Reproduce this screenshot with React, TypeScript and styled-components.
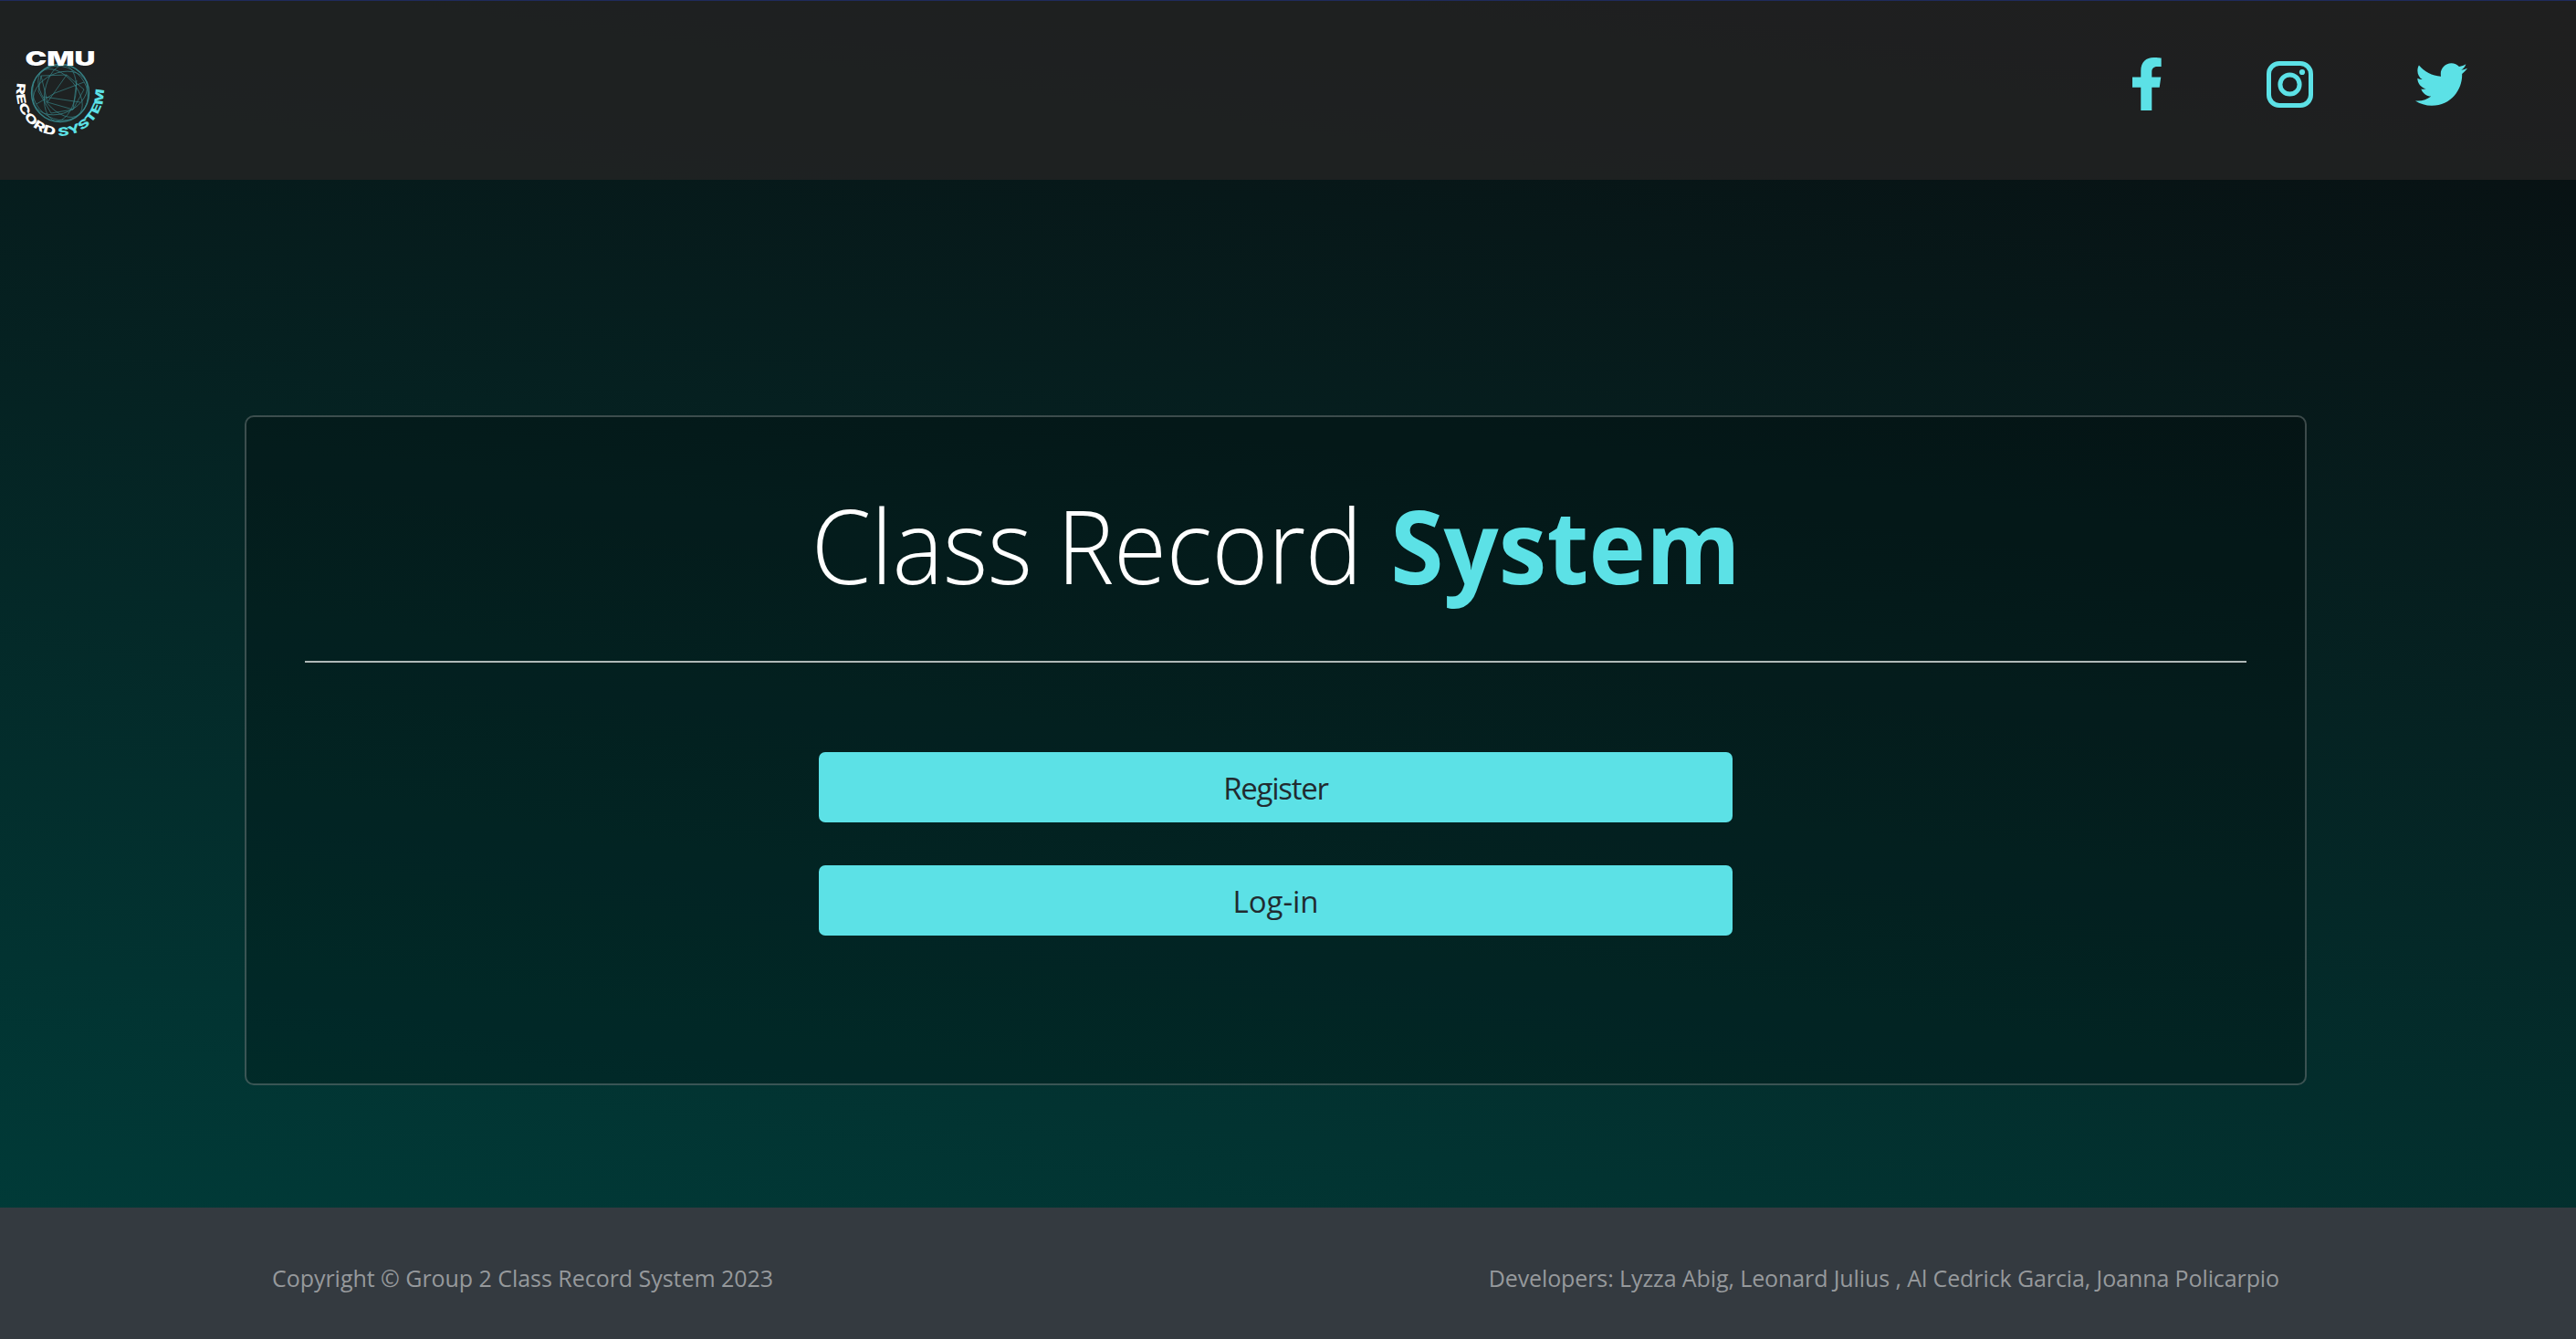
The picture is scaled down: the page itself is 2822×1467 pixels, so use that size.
import React from "react";
import styled, { createGlobalStyle } from "styled-components";
import { FaTwitter } from "react-icons/fa";

const Global = createGlobalStyle`
  * { box-sizing: border-box; }
  body { margin: 0; font-family: "Open Sans", "Noto Sans", sans-serif; }
`;
const Page = styled.div`
  height: 1467px;
  display: flex;
  flex-direction: column;
  background: linear-gradient(188deg, #090d0f 0%, #003e3b 100%);
`;
const Nav = styled.nav`
  height: 197px;
  flex: none;
  display: flex;
  justify-content: space-between;
  align-items: flex-start;
  padding: 29px 119px 0 0;
  background: rgba(38, 37, 37, 0.77);
  border-top: 1px solid #1f2b5c;
`;
const Socials = styled.div`
  display: flex;
  align-items: center;
  height: 124px;
  color: #5ce1e6;
`;
const Social = styled.a<{ $gap: number }>`
  display: flex;
  font-size: 57px;
  margin-left: ${(p) => p.$gap}px;
`;
const Main = styled.main`
  flex: 1;
  padding: 258px 295px 0 268px;
`;
const Card = styled.section`
  height: 734px;
  border: 2px solid rgba(128, 140, 140, 0.45);
  border-radius: 10px;
  background: rgba(0, 0, 0, 0.2);
  padding: 0 64px;
  display: flex;
  flex-direction: column;
  align-items: center;
`;
const Title = styled.h1`
  margin: 60px 0 0;
  height: 160px;
  line-height: 160px;
  font-size: 112px;
  font-weight: 300;
  letter-spacing: -0.4px;
  color: #fff;
  white-space: pre;
  transform: scaleX(0.943);
`;
const Accent = styled.span`
  font-weight: 700;
  color: #5ce1e6;
  letter-spacing: 0.2px;
  margin-left: 4px;
`;
const Rule = styled.hr`
  width: 100%;
  height: 2px;
  border: 0;
  margin: 47px 0 98px;
  background: #b0b9b8;
`;
const Button = styled.button<{ $track: number }>`
  width: 1001px;
  height: 77px;
  margin: 0 0 47px;
  border: 0;
  border-radius: 7px;
  background: #5ce1e6;
  color: #212b30;
  font: 400 33px/77px "Open Sans", "Noto Sans", sans-serif;
  letter-spacing: ${(p) => p.$track}px;
  padding: 1px 0 0;
`;
const Footer = styled.footer`
  height: 144px;
  flex: none;
  display: flex;
  justify-content: space-between;
  padding: 59px 325px 0 298px;
  background: #343a40;
  color: #96999c;
  font-size: 25px;
  line-height: 36px;
  white-space: pre;
`;
const Note = styled.span<{ $track: number }>`
  letter-spacing: ${(p) => p.$track}px;
`;
const LogoSvg = styled.svg`
  display: block;
  width: 140px;
  height: 140px;
`;

const Logo = () => (
  <LogoSvg viewBox="0 0 140 140" fontFamily="Inter, sans-serif" fontWeight="800">
    <g fill="none" stroke="#3fa3a8" strokeWidth="0.7" opacity="0.75">
      <circle cx="66" cy="72" r="31.5" strokeWidth="1.4" />
      <ellipse cx="66" cy="72" rx="31.5" ry="28.5" transform="rotate(40 66 72)" />
      <ellipse cx="66" cy="72" rx="31" ry="18" transform="rotate(50 66 72)" />
      <ellipse cx="66" cy="72" rx="31" ry="22" transform="rotate(-25 66 72)" />
      <ellipse cx="66" cy="72" rx="31" ry="17" transform="rotate(100 66 72)" />
      <path d="M45 53L73 52L92 68L80 90L56 94L42 70Z M45 53L52 82L80 90L84 58 M40 84L60 72L92 60 M52 82L73 52 M48 76L88 82" />
    </g>
    <text x="27.5" y="41.8" fontSize="22" fontWeight="900" fill="#fff" textLength="77" lengthAdjust="spacingAndGlyphs">CMU</text>
    <path id="ring" d="M19.2 61A47.7 47.7 0 1 0 112.8 63" fill="none" />
    <text fontSize="12.8" fill="#fff"><textPath href="#ring" startOffset="0" textLength="79" lengthAdjust="spacingAndGlyphs">RECORD</textPath></text>
    <text fontSize="12.8" fill="#5ce1e6"><textPath href="#ring" startOffset="83" textLength="80" lengthAdjust="spacingAndGlyphs">SYSTEM</textPath></text>
  </LogoSvg>
);

const Facebook = () => (
  <svg width="32" height="58" viewBox="0 0 32 58" fill="currentColor">
    <path d="M9.3 58V32.7H0V21.5H9.3V14.5C9.3 5 15 0 23.3 0C28 0 31.7.6 31.7.6V9.9H27.5C22.8 9.9 21.3 12.4 21.3 15.5V21.5H31.3L29.7 32.7H21.3V58Z" />
  </svg>
);

const Instagram = () => (
  <svg width="51" height="51" viewBox="0 0 51 51" fill="none" stroke="currentColor" strokeWidth="5">
    <rect x="2.5" y="2.5" width="46" height="46" rx="11.5" />
    <circle cx="25.5" cy="25.5" r="10.6" />
    <circle cx="39" cy="12" r="3.1" fill="currentColor" stroke="none" />
  </svg>
);

export default function App() {
  return (
    <>
      <Global />
      <Page>
        <Nav>
          <Logo />
          <Socials>
            <Social $gap={0}><Facebook /></Social>
            <Social $gap={115}><Instagram /></Social>
            <Social $gap={112}><FaTwitter /></Social>
          </Socials>
        </Nav>
        <Main>
          <Card>
            <Title>Class Record <Accent>System</Accent></Title>
            <Rule />
            <Button $track={-1.25}>Register</Button>
            <Button $track={0}>Log-in</Button>
          </Card>
        </Main>
        <Footer>
          <Note $track={-0.04}>Copyright © Group 2 Class Record System 2023</Note>
          <Note $track={-0.1}>Developers: Lyzza Abig, Leonard Julius , Al Cedrick Garcia, Joanna Policarpio</Note>
        </Footer>
      </Page>
    </>
  );
}
